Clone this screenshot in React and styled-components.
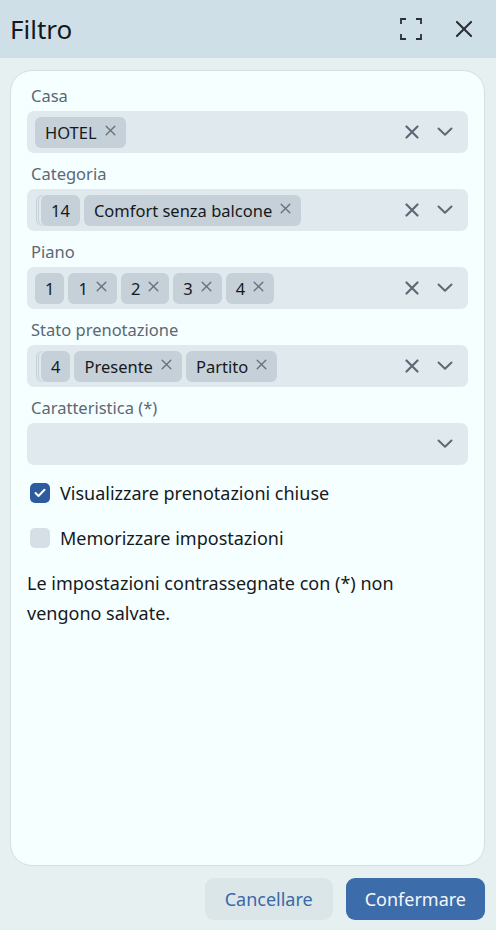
import React from 'react'
import styled, { createGlobalStyle } from 'styled-components'

const GlobalStyle = createGlobalStyle`
  html, body {
    margin: 0;
    padding: 0;
    height: 100%;
  }
  body {
    font-family: "Noto Sans", "Open Sans", sans-serif;
    background: #e6f0f1;
    color: #1a1d21;
  }
  #root {
    height: 100%;
  }
`

// --------- layout -----------
const Page = styled.div`
  height: 930px;
  display: flex;
  flex-direction: column;
`
const Header = styled.div`
  height: 58px;
  flex-shrink: 0;
  display: flex;
  align-items: center;
  padding: 0 12px 0 10px;
  background: #cfdfe7;
`
const Title = styled.h1`
  flex: 1;
  margin: 0;
  font-size: 26px;
  font-weight: 400;
  color: #15181c;
`
const HeaderButton = styled.button`
  width: 40px;
  height: 40px;
  border: none;
  background: transparent;
  display: flex;
  align-items: center;
  justify-content: center;
  padding: 0;
  margin-left: ${(p) => p.gap || 0}px;
  color: #2b2f33;
`
const Panel = styled.div`
  flex: 1;
  margin: 12px 11px 0 10px;
  padding: 14px 16px 0 16px;
  background: #f5ffff;
  border: 1px solid #d3dfe1;
  border-radius: 22px;
`

// --------- fields -----------
const Field = styled.div`
  margin-bottom: 10px;
`
const Label = styled.div`
  font-size: 16.5px;
  line-height: 22px;
  color: #5c6874;
  padding-left: 4px;
  margin-bottom: 4px;
`
const SelectBox = styled.div`
  height: 42px;
  box-sizing: border-box;
  display: flex;
  align-items: center;
  padding: 0 15px 0 8px;
  background: #e0eaee;
  border-radius: 7px;
`
const Chips = styled.div`
  flex: 1;
  display: flex;
  align-items: center;
  gap: 4px;
  padding-left: ${(p) => (p.stacked ? 6 : 0)}px;
`
const Chip = styled.div`
  height: 31px;
  display: flex;
  align-items: center;
  gap: 8px;
  padding: 0 10px 0 10px;
  background: #c5d0d9;
  border-radius: 6px;
  font-size: 16.5px;
  color: #16191c;
  box-shadow: ${(p) =>
    p.stacked
      ? '-2px 0 0 0 #e0eaee, -3px 0 0 0 #c5d0d9, -4px 0 0 0 #e0eaee, -5px 0 0 0 #c5d0d9'
      : 'none'};
`
const ChipRemove = styled.span`
  display: flex;
  align-items: center;
  color: #67717c;
  margin-top: -3px;
`
const Actions = styled.div`
  display: flex;
  align-items: center;
  gap: 18px;
  color: #5e6976;
`

// --------- options -----------
const CheckRow = styled.label`
  display: flex;
  align-items: center;
  gap: 10px;
  height: 24px;
  margin: ${(p) => p.top}px 0 0 3px;
  font-size: 18px;
  color: #17191c;
`
const Box = styled.span`
  width: 20px;
  height: 20px;
  flex-shrink: 0;
  border-radius: 5px;
  display: flex;
  align-items: center;
  justify-content: center;
  background: ${(p) => (p.checked ? '#2c5c9e' : '#d6dfe5')};
`
const Note = styled.p`
  margin: 18px 0 0 0;
  font-size: 18px;
  line-height: 30px;
  color: #17191c;
`

// --------- footer -----------
const Footer = styled.div`
  height: 64px;
  flex-shrink: 0;
  display: flex;
  justify-content: flex-end;
  align-items: flex-start;
  gap: 13px;
  padding: 12px 11px 0 0;
  box-sizing: border-box;
`
const Button = styled.button`
  height: 42px;
  padding: 0 ${(p) => (p.primary ? 19 : 20)}px;
  border: none;
  border-radius: 9px;
  font-family: inherit;
  font-size: 18px;
  background: ${(p) => (p.primary ? '#3d6caa' : '#dbe6e9')};
  color: ${(p) => (p.primary ? '#f3f7fb' : '#3b68a6')};
`

const CloseIcon = ({ size = 14, stroke = 2.2 }) => (
  <svg width={size} height={size} viewBox="0 0 14 14" fill="none">
    <path d="M1.5 1.5 L12.5 12.5 M12.5 1.5 L1.5 12.5" stroke="currentColor" strokeWidth={stroke} strokeLinecap="round" />
  </svg>
)

const Chevron = () => (
  <svg width="16" height="10" viewBox="0 0 16 10" fill="none">
    <path d="M1.5 1.5 L8 7.8 L14.5 1.5" stroke="currentColor" strokeWidth="2" strokeLinecap="round" strokeLinejoin="round" />
  </svg>
)

const FullscreenIcon = () => (
  <svg width="22" height="22" viewBox="0 0 22 22" fill="none" stroke="currentColor" strokeWidth="1.8">
    <path d="M1 6 V1 H6 M16 1 H21 V6 M21 16 V21 H16 M6 21 H1 V16" />
  </svg>
)

const Check = () => (
  <svg width="12" height="10" viewBox="0 0 12 10" fill="none">
    <path d="M1.5 5 L4.5 8 L10.5 1.8" stroke="#fff" strokeWidth="2" strokeLinecap="round" strokeLinejoin="round" />
  </svg>
)

const fields = [
  { label: 'Casa', chips: [{ text: 'HOTEL', x: true }] },
  { label: 'Categoria', stacked: true, chips: [{ text: '14', count: true }, { text: 'Comfort senza balcone', x: true }] },
  {
    label: 'Piano',
    chips: [
      { text: '1' },
      { text: '1', x: true },
      { text: '2', x: true },
      { text: '3', x: true },
      { text: '4', x: true },
    ],
  },
  { label: 'Stato prenotazione', stacked: true, chips: [{ text: '4', count: true }, { text: 'Presente', x: true }, { text: 'Partito', x: true }] },
  { label: 'Caratteristica (*)', chips: [], empty: true },
]

const App = () => {
  return (
    <Page>
      <GlobalStyle />
      <Header>
        <Title>Filtro</Title>
        <HeaderButton>
          <FullscreenIcon />
        </HeaderButton>
        <HeaderButton gap={13}>
          <CloseIcon size={18} stroke={1.6} />
        </HeaderButton>
      </Header>

      <Panel>
        {fields.map((f) => (
          <Field key={f.label}>
            <Label>{f.label}</Label>
            <SelectBox>
              <Chips stacked={f.stacked}>
                {f.chips.map((c, i) => (
                  <Chip key={i} stacked={c.count && f.stacked}>
                    {c.text}
                    {c.x && (
                      <ChipRemove>
                        <CloseIcon size={11} stroke={1.7} />
                      </ChipRemove>
                    )}
                  </Chip>
                ))}
              </Chips>
              <Actions>
                {!f.empty && <CloseIcon size={14} stroke={2.2} />}
                <Chevron />
              </Actions>
            </SelectBox>
          </Field>
        ))}

        <CheckRow top={16}>
          <Box checked>
            <Check />
          </Box>
          Visualizzare prenotazioni chiuse
        </CheckRow>
        <CheckRow top={21}>
          <Box />
          Memorizzare impostazioni
        </CheckRow>
        <Note>Le impostazioni contrassegnate con (*) non vengono salvate.</Note>
      </Panel>

      <Footer>
        <Button>Cancellare</Button>
        <Button primary>Confermare</Button>
      </Footer>
    </Page>
  )
}

export default App
